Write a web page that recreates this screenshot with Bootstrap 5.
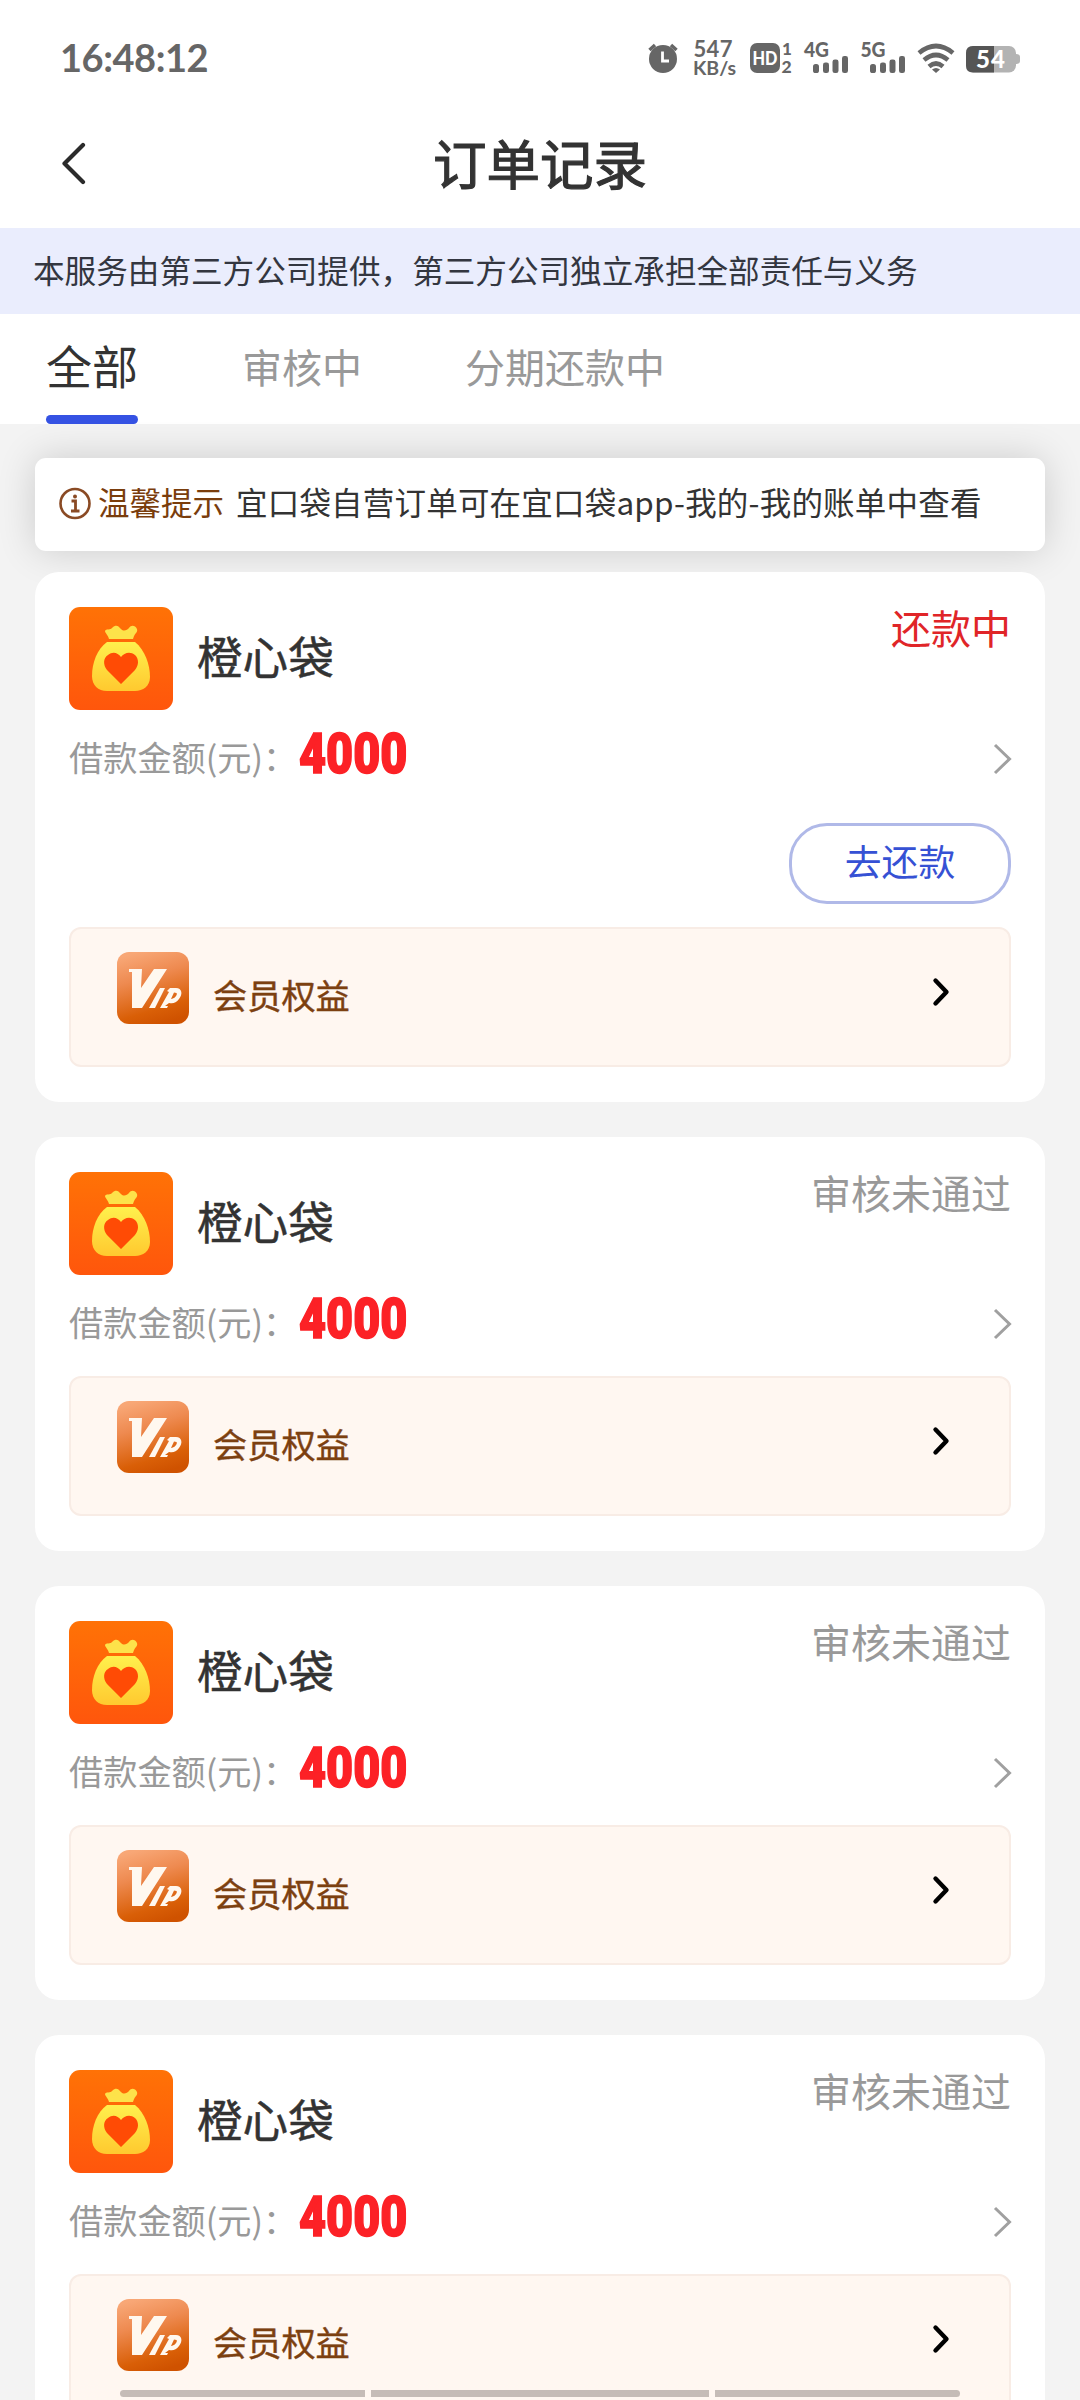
<!DOCTYPE html>
<html lang="zh-CN">
<head>
<meta charset="utf-8">
<meta name="viewport" content="width=device-width, initial-scale=1">
<title>订单记录</title>
<link href="https://cdn.jsdelivr.net/npm/bootstrap@5.3.0/dist/css/bootstrap.min.css" rel="stylesheet">
<style>
  body { font-family: "Noto Sans CJK SC", "Noto Sans", sans-serif; color: #333; background: #f3f3f3; }
  .screen { width: 1080px; height: 2400px; }
  svg { display: block; flex: none; }
  svg text { font-family: "Lato", sans-serif; font-weight: 700; }
  .status-bar { height: 96px; padding: 20px 60px 0 60px; color: #666; }
  .clock { font: 700 38px/75px "Lato", sans-serif; letter-spacing: -.45px; }
  .title-bar { height: 132px; padding: 3px 0 0 62px; }
  .title-bar h1 { font-size: 53.5px; line-height: 132px; font-weight: 400; -webkit-text-stroke: 1.2px #333; left: 0; right: 0; top: 0; }
  .notice { height: 86px; padding: 0 33px 2px; font-size: 31.6px; background: #eaedfd; color: #333640; }
  .tabs { height: 110px; padding: 0 46px; }
  .tabs .nav-link { padding: 0 0 6px; height: 110px; font-size: 40px; color: #999; position: relative; }
  .tabs .nav-link.active { font-size: 46px; color: #333; padding-bottom: 10px; }
  .tabs .nav-link.active::after { content: ""; position: absolute; left: 0; right: 0; bottom: 0; height: 9px; border-radius: 5px; background: #3552e3; }
  .tip { margin: 34px 35px 21px; height: 93px; border-radius: 11px; padding: 0 24px 6px; font-size: 31.5px; box-shadow: 0 0 38px rgba(0,0,0,.16); }
  .tip svg { margin-top: 2px; }
  .tip-name { color: #7a3d0c; margin: 0 12px 0 7px; }
  .tip-text { letter-spacing: .2px; }
  .order { margin: 0 35px 35px; padding: 35px 34px; border: 0; border-radius: 24px; position: relative; }
  .order-head { height: 103px; }
  .order-name { font-size: 45.6px; line-height: 96px; margin-left: 24px; -webkit-text-stroke: .5px #333; }
  .order-state { font-size: 40px; line-height: 40px; color: #999; margin-top: 0; }
  .order-state.due { color: #e02528; }
  .order-sum { height: 101px; padding-bottom: 5px; }
  .order-sum svg { margin: 2px -2px 0 0; }
  .sum-label { font-size: 34.2px; color: #999; line-height: 90px; padding-bottom: 4px; }
  .sum-value { font: 900 55px/90px Roboto, sans-serif; color: #fc2126; transform: scaleX(.85); transform-origin: left center; -webkit-text-stroke: 1.6px #fc2126; margin-left: 2px; padding-bottom: 8px; }
  .btn-repay { width: 222px; height: 81px; border: 3px solid #b0b9e8; border-radius: 38px; font-size: 36.8px; line-height: 64px; color: #3651d4; padding: 0 0 8px; }
  .repay-row { margin: 12px 0 23px; }
  .vip { height: 140px; border: 2px solid #f8ece5; border-radius: 12px; background: #fff7f1; padding: 23px 58px 0 46px; }
  .vip-name { font-size: 34.2px; line-height: 84px; margin-left: 24px; color: #7c4010; -webkit-text-stroke: .4px #7c4010; }
  .vip-go { margin-top: 24px; }
  .home-bar { left: 120px; top: 2390px; width: 840px; gap: 6px; z-index: 5; }
  .home-bar span { height: 7px; flex: 245; background: #c5bcb7; }
  .home-bar span:nth-child(2) { flex: 338; }
  .home-bar span:first-child { border-radius: 4px 0 0 4px; }
  .home-bar span:last-child { border-radius: 0 4px 4px 0; }
</style>
</head>
<body>
<svg width="0" height="0" class="position-absolute">
  <defs>
    <linearGradient id="gOrange" x1="0" y1="0" x2="0" y2="1"><stop offset="0" stop-color="#ff7206"/><stop offset="1" stop-color="#ff560c"/></linearGradient>
    <linearGradient id="gBag" x1="0" y1="0" x2="0" y2="1"><stop offset="0" stop-color="#fff04d"/><stop offset="1" stop-color="#ffc92f"/></linearGradient>
    <linearGradient id="gVip" x1=".3" y1="0" x2=".6" y2="1"><stop offset="0" stop-color="#f8a776"/><stop offset=".35" stop-color="#ee8a50"/><stop offset=".8" stop-color="#d95f07"/><stop offset="1" stop-color="#cf5200"/></linearGradient>
  </defs>
  <symbol id="bag" viewBox="0 0 104 103">
    <rect width="104" height="103" rx="11" fill="url(#gOrange)"/>
    <path fill="#fde24a" d="M40 32 C39 28 36 26 36 24 C37 21 41 24 44 20 C48 17 50 20 52 22 C55 25 58 23 60 21 C62 18 66 18 68 22 C69 26 66 25 64 32 Z"/>
    <path fill="url(#gBag)" d="M38 35 H66 C76 43 81 58 81 70 C81 79 74 84 66 84 H38 C29 84 23 78 23 69 C23 56 28 42 38 35 Z"/>
    <path fill="#ff4b05" d="M52 77 L38 63 C34 58 34 51 39 48 C44 44 49 46 52 50 C55 46 61 44 66 48 C70 52 70 58 66 63 Z"/>
  </symbol>
  <symbol id="vip" viewBox="0 0 72 72">
    <rect width="72" height="72" rx="12" fill="url(#gVip)"/>
    <g fill="#fff8ef">
      <path d="M12 17 H25 L24 36 L37 17 H50 L25 56 H15 V20 H12 Z"/>
      <path d="M43 36 H48 L38 56 H32 Z"/>
      <path fill-rule="evenodd" d="M53 36 H59 C65 36 66 42 62 47 C59 51 56 52 52 51 L48 54 H51 L50 56 H43 L52 40 L50 39 Z M57 40.500 L54 47 C57 47 61 43 59.500 41 Z"/>
    </g>
  </symbol>
  <symbol id="more" viewBox="0 0 20 32"><path d="M2 2 L16.500 16 L2 30" fill="none" stroke="#a0a0a0" stroke-width="3"/></symbol>
  <symbol id="go" viewBox="0 0 20 32"><path d="M4.500 4.500 L15.500 16 L4.500 27.500" fill="none" stroke="#000" stroke-width="4.400" stroke-linecap="round" stroke-linejoin="round"/></symbol>
  <symbol id="bars" viewBox="0 0 36 17"><g fill="#666"><rect y="8" width="6" height="9" rx="2.600"/><rect x="10" y="6.500" width="6" height="10.500" rx="2.300"/><rect x="19.500" y="3.500" width="6" height="13.500" rx="2.300"/><rect x="29" width="6" height="17" rx="2.300"/></g></symbol>
</svg>

<div class="screen position-relative overflow-hidden">
  <header class="bg-white">
    <div class="status-bar d-flex justify-content-between">
      <span class="clock">16:48:12</span>
      <svg width="376" height="60" viewBox="0 0 376 60" fill="#666">
        <g transform="translate(4 0)">
          <circle cx="15" cy="39" r="14"/><path d="M1.500 30 L7 25 M28.500 30 L23 25" stroke="#666" stroke-width="3.500"/>
          <path d="M14.500 31.500 V41 H21" fill="none" stroke="#fff" stroke-width="2.800"/>
          <text x="45.500" y="36.500" font-size="22" textLength="39">547</text>
          <text x="45" y="55" font-size="19.500" textLength="43">KB/s</text>
          <rect x="102" y="23" width="30" height="30" rx="7"/>
          <text x="104.500" y="45" font-size="19" textLength="25" fill="#fff" lengthAdjust="spacingAndGlyphs" style="font-weight:900">HD</text>
          <text x="134" y="35" font-size="17" style="font-weight:900">1</text><text x="133.500" y="52.500" font-size="17.500" style="font-weight:900">2</text>
          <text x="156" y="37" font-size="20" textLength="25" lengthAdjust="spacingAndGlyphs" style="font-weight:900">4G</text>
          <use href="#bars" x="165" y="36" width="36" height="17"/>
          <text x="212.500" y="37" font-size="20" textLength="25" lengthAdjust="spacingAndGlyphs" style="font-weight:900">5G</text>
          <use href="#bars" x="222" y="36" width="36" height="17"/>
          <g fill="none" stroke="#666" stroke-width="4.600"><path d="M271 33 Q288 19 305 33"/><path d="M276 40 Q288 30 300 40"/><path d="M281 46.500 Q288 40.500 295 46.500"/></g>
          <path d="M284 49.500 Q288 46.500 292 49.500 L288 53 Z"/>
          <rect x="318" y="26" width="50" height="26.500" rx="7" fill="#b3b3b3"/><path d="M368 34 q4 0 4 3 v4 q0 3-4 3z" fill="#b3b3b3"/>
          <path d="M325 26 H346 V52.500 H325 Q318 52.500 318 45.500 V33 Q318 26 325 26" fill="#555"/>
          <text x="328" y="48" font-size="24" textLength="29" fill="#fff" style="font-weight:900">54</text>
        </g>
      </svg>
    </div>
    <div class="title-bar position-relative d-flex align-items-center">
      <svg width="26" height="44" viewBox="0 0 26 44"><path d="M21 3 L2.500 21.500 L21 40" fill="none" stroke="#2b2b2b" stroke-width="4.200" stroke-linecap="round" stroke-linejoin="round"/></svg>
      <h1 class="position-absolute text-center m-0">订单记录</h1>
    </div>
  </header>
  <div class="notice d-flex align-items-center text-nowrap">本服务由第三方公司提供，第三方公司独立承担全部责任与义务</div>
  <nav class="tabs nav bg-white">
    <a class="nav-link active d-flex align-items-center" href="#">全部</a>
    <a class="nav-link d-flex align-items-center" style="margin-left:104px" href="#">审核中</a>
    <a class="nav-link d-flex align-items-center" style="margin-left:103px" href="#">分期还款中</a>
  </nav>

  <div class="tip bg-white d-flex align-items-center text-nowrap">
    <svg width="32" height="34" viewBox="0 0 32 34"><circle cx="16" cy="17.500" r="14.500" fill="none" stroke="#8a4a24" stroke-width="2.600"/><circle cx="16" cy="10.500" r="2" fill="#8a4a24"/><path d="M12.500 15 H16.500 V24.500 M12 25 H20.500" fill="none" stroke="#8a4a24" stroke-width="2.800"/></svg>
    <span class="tip-name">温馨提示</span><span class="tip-text">宜口袋自营订单可在宜口袋app-我的-我的账单中查看</span>
  </div>

  <main>
    <section class="order card">
      <div class="order-head d-flex">
        <svg width="104" height="103"><use href="#bag"/></svg>
        <span class="order-name">橙心袋</span>
        <span class="order-state due ms-auto">还款中</span>
      </div>
      <div class="order-sum d-flex align-items-center">
        <span class="sum-label">借款金额(元)：</span><span class="sum-value me-auto">4000</span>
        <svg width="20" height="32"><use href="#more"/></svg>
      </div>
      <div class="repay-row d-flex justify-content-end"><button class="btn btn-repay">去还款</button></div>
      <div class="vip d-flex align-items-start">
        <svg width="72" height="72"><use href="#vip"/></svg><span class="vip-name me-auto">会员权益</span>
        <svg class="vip-go" width="20" height="32"><use href="#go"/></svg>
      </div>
    </section>

    <section class="order card">
      <div class="order-head d-flex">
        <svg width="104" height="103"><use href="#bag"/></svg>
        <span class="order-name">橙心袋</span>
        <span class="order-state ms-auto">审核未通过</span>
      </div>
      <div class="order-sum d-flex align-items-center">
        <span class="sum-label">借款金额(元)：</span><span class="sum-value me-auto">4000</span>
        <svg width="20" height="32"><use href="#more"/></svg>
      </div>
      <div class="vip d-flex align-items-start">
        <svg width="72" height="72"><use href="#vip"/></svg><span class="vip-name me-auto">会员权益</span>
        <svg class="vip-go" width="20" height="32"><use href="#go"/></svg>
      </div>
    </section>

    <section class="order card">
      <div class="order-head d-flex">
        <svg width="104" height="103"><use href="#bag"/></svg>
        <span class="order-name">橙心袋</span>
        <span class="order-state ms-auto">审核未通过</span>
      </div>
      <div class="order-sum d-flex align-items-center">
        <span class="sum-label">借款金额(元)：</span><span class="sum-value me-auto">4000</span>
        <svg width="20" height="32"><use href="#more"/></svg>
      </div>
      <div class="vip d-flex align-items-start">
        <svg width="72" height="72"><use href="#vip"/></svg><span class="vip-name me-auto">会员权益</span>
        <svg class="vip-go" width="20" height="32"><use href="#go"/></svg>
      </div>
    </section>

    <section class="order card">
      <div class="order-head d-flex">
        <svg width="104" height="103"><use href="#bag"/></svg>
        <span class="order-name">橙心袋</span>
        <span class="order-state ms-auto">审核未通过</span>
      </div>
      <div class="order-sum d-flex align-items-center">
        <span class="sum-label">借款金额(元)：</span><span class="sum-value me-auto">4000</span>
        <svg width="20" height="32"><use href="#more"/></svg>
      </div>
      <div class="vip d-flex align-items-start">
        <svg width="72" height="72"><use href="#vip"/></svg><span class="vip-name me-auto">会员权益</span>
        <svg class="vip-go" width="20" height="32"><use href="#go"/></svg>
      </div>
    </section>
  </main>
  <div class="home-bar position-absolute d-flex"><span></span><span></span><span></span></div>
</div>
<script src="https://cdn.jsdelivr.net/npm/bootstrap@5.3.0/dist/js/bootstrap.bundle.min.js"></script>
</body>
</html>
